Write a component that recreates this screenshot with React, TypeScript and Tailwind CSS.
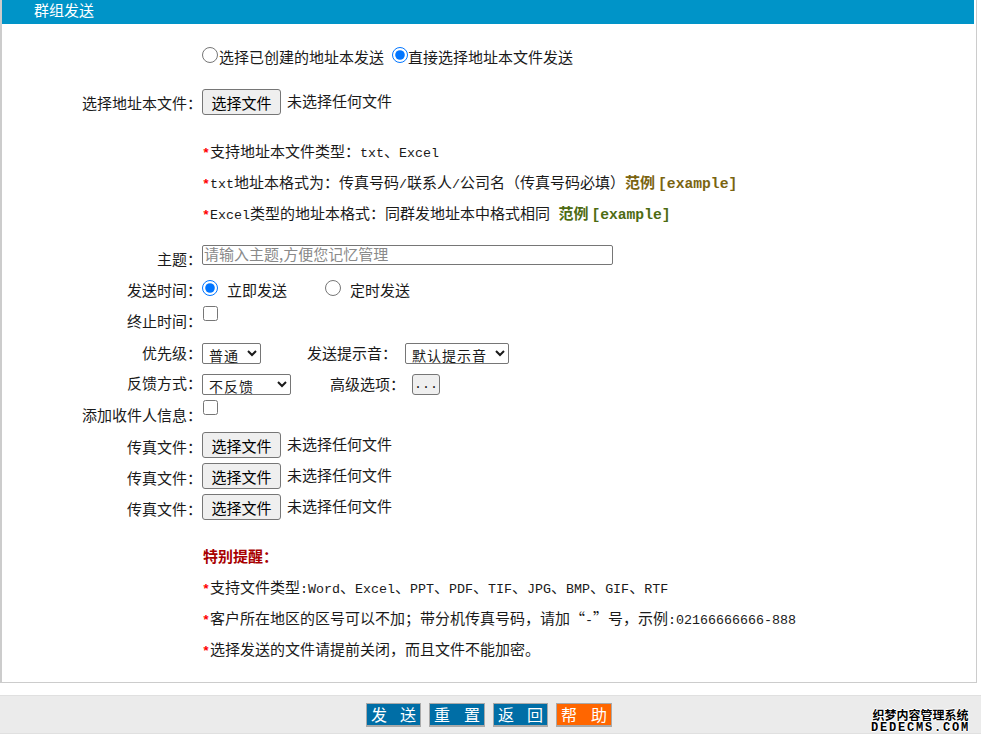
const cjk = "font-['Noto_Sans_CJK_SC','Liberation_Sans',sans-serif]"

function Latin({ children }: { children: React.ReactNode }) {
  return <span className="font-['Liberation_Mono',monospace] text-[13.33px]">{children}</span>
}

function Star() {
  return <span className="font-['Liberation_Mono',monospace] text-[13.33px] font-bold text-[#ff0000]">*</span>
}

function Example({ color }: { color: string }) {
  return (
    <a className={`font-bold ${color}`}>
      范例<span className="ml-[3px] font-['Liberation_Mono',monospace] text-[14.67px]">[example]</span>
    </a>
  )
}

function FileField() {
  return (
    <div className="flex items-center gap-[6px]">
      <button className="h-[26px] w-[79px] rounded-[3px] border border-[#767676] bg-[#efefef] text-[15px] leading-none text-black">
        选择文件
      </button>
      <span className="-mt-[3px]">未选择任何文件</span>
    </div>
  )
}

function Row({ label, height, children, className = "" }: { label?: string; height: number; children?: React.ReactNode; className?: string }) {
  return (
    <div className={`flex ${className}`} style={{ height }}>
      <div className="w-[200px] shrink-0 text-right">{label}</div>
      <div className="flex-1">{children}</div>
    </div>
  )
}

function Note({ children }: { children: React.ReactNode }) {
  return <div className="h-[31px] leading-[31px] whitespace-nowrap">{children}</div>
}

function FooterButton({ left, right, orange, width = "w-[55px]" }: { left: string; right: string; orange?: boolean; width?: string }) {
  return (
    <button
      className={`flex h-[24px] ${width} items-center justify-between border border-b-2 border-[#a9a9a9] px-[4px] text-[16px] leading-none text-white ${orange ? "bg-[#ff6600]" : "bg-[#006ea6]"}`}
    >
      <span>{left}</span>
      <span>{right}</span>
    </button>
  )
}

export default function App() {
  return (
    <div className={`h-[741px] w-[981px] overflow-hidden bg-white text-[15px] leading-[20px] text-[#1a1a1a] ${cjk}`}>
      <div className="mr-[4px] h-[683px] border-b border-l-2 border-r border-[#cccccc]">
        <div className="mr-[2px] h-[24px] bg-[#0094c8] pl-[32px] leading-[20px] text-white">群组发送</div>

        <div className="pt-[23px]">
          <Row height={42}>
            <div className="flex items-center">
              <input type="radio" name="addr" className="m-0 mb-[4px] h-[16px] w-[16px]" />
              <span className="ml-[1px]">选择已创建的地址本发送</span>
              <input type="radio" name="addr" defaultChecked className="m-0 mb-[4px] ml-[8px] h-[16px] w-[16px]" />
              <span>直接选择地址本文件发送</span>
            </div>
          </Row>
          <Row label="选择地址本文件：" height={46} className="leading-[28px]">
            <FileField />
          </Row>
          <div className="ml-[200px]">
            <Note><Star />支持地址本文件类型：<Latin>txt</Latin>、<Latin>Excel</Latin></Note>
            <Note>
              <Star /><Latin>txt</Latin>地址本格式为：传真号码<Latin>/</Latin>联系人<Latin>/</Latin>公司名（传真号码必填）<Example color="text-[#7a6410]" />
            </Note>
            <Note>
              <Star /><Latin>Excel</Latin>类型的地址本格式：同群发地址本中格式相同 <span className="ml-[5px]"><Example color="text-[#4d6b12]" /></span>
            </Note>
          </div>
        </div>

        <div className="pt-[16px]">
          <Row label="主题：" height={31} className="leading-[30px]">
            <input
              placeholder="请输入主题,方便您记忆管理"
              className="mt-[1px] block h-[20px] w-[411px] rounded-[2px] border border-[#767676] px-[1px] pb-[2px] text-[15px] placeholder:text-[#8a8a8a]"
            />
          </Row>
          <Row label="发送时间：" height={31} className="leading-[30px]">
            <div className="flex items-start">
              <input type="radio" name="when" defaultChecked className="m-0 mt-[5px] h-[16px] w-[16px]" />
              <span className="ml-[9px]">立即发送</span>
              <input type="radio" name="when" className="m-0 mt-[5px] ml-[38px] h-[16px] w-[16px]" />
              <span className="ml-[9px]">定时发送</span>
            </div>
          </Row>
          <Row label="终止时间：" height={31} className="leading-[30px]">
            <input type="checkbox" className="m-0 ml-[1px] block h-[15px] w-[15px]" />
          </Row>
          <Row label="优先级：" height={31} className="leading-[32px]">
            <div className="flex items-start pt-[6px]">
              <select className="h-[21px] w-[59px] rounded-[2px] border border-[#767676] pl-[2px] text-[14px] leading-none tracking-[1px]">
                <option>普通</option>
              </select>
              <span className="ml-[46px] leading-[19px]">发送提示音：</span>
              <select className="ml-[8px] h-[21px] w-[104px] rounded-[2px] border border-[#767676] pl-[2px] text-[14px] leading-none tracking-[1px]">
                <option>默认提示音</option>
              </select>
            </div>
          </Row>
          <Row label="反馈方式：" height={32} className="leading-[30px]">
            <div className="flex items-start pt-[6px]">
              <select className="h-[21px] w-[89px] rounded-[2px] border border-[#767676] pl-[2px] text-[14px] leading-none tracking-[1px]">
                <option>不反馈</option>
              </select>
              <span className="ml-[39px] leading-[19px]">高级选项：</span>
              <button className="ml-[7px] h-[21px] w-[28px] rounded-[3px] border border-[#767676] bg-[#efefef] font-['Liberation_Mono',monospace] text-[13.33px] leading-none">...</button>
            </div>
          </Row>
          <Row label="添加收件人信息：" height={32} className="leading-[30px]">
            <input type="checkbox" className="m-0 ml-[1px] block h-[15px] w-[15px]" />
          </Row>
          <Row label="传真文件：" height={31} className="leading-[29px]"><FileField /></Row>
          <Row label="传真文件：" height={31} className="leading-[29px]"><FileField /></Row>
          <Row label="传真文件：" height={31} className="leading-[29px]"><FileField /></Row>
        </div>

        <div className="ml-[200px] pt-[15px]">
          <div className="h-[31px] pl-[1px] font-bold leading-[32px] text-[#a80000]">特别提醒：</div>
          <Note><Star />支持文件类型<Latin>:Word</Latin>、<Latin>Excel</Latin>、<Latin>PPT</Latin>、<Latin>PDF</Latin>、<Latin>TIF</Latin>、<Latin>JPG</Latin>、<Latin>BMP</Latin>、<Latin>GIF</Latin>、<Latin>RTF</Latin></Note>
          <Note><Star />客户所在地区的区号可以不加；带分机传真号码，请加“<Latin>-</Latin>”号，示例<Latin>:02166666666-888</Latin></Note>
          <Note><Star />选择发送的文件请提前关闭，而且文件不能加密。</Note>
        </div>
      </div>

      <div className="relative mt-[12px] flex h-[39px] items-center justify-center gap-[8px] border-b border-t border-[#e0e0e0] bg-[#ebebeb] pr-[3px]">
        <FooterButton left="发" right="送" />
        <FooterButton left="重" right="置" width="w-[56px]" />
        <FooterButton left="返" right="回" />
        <FooterButton left="帮" right="助" width="w-[56px]" orange />
        <div className="absolute right-[11px] top-[12px] text-center text-[12px] font-bold text-black [text-shadow:1px_0_0_#fff,-1px_0_0_#fff,0_1px_0_#fff,0_-1px_0_#fff]">
          <div className="leading-[14px]">织梦内容管理系统</div>
          <div className="font-['Liberation_Mono',monospace] leading-[12px] tracking-[1.8px]">DEDECMS.COM</div>
        </div>
      </div>
    </div>
  )
}
